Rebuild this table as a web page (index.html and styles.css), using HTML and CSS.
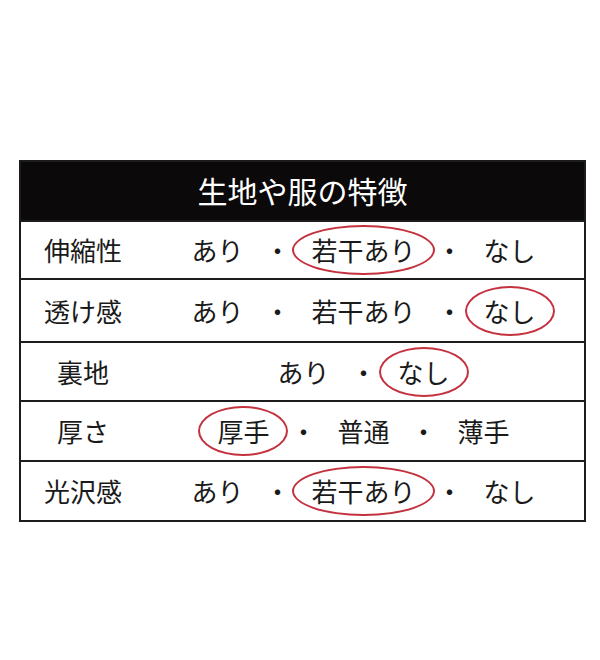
FILE: index.html
```html
<!DOCTYPE html>
<html lang="ja">
<head>
<meta charset="utf-8">
<title>生地や服の特徴</title>
<link rel="stylesheet" href="styles.css">
</head>
<body>
<div class="table">
  <div class="header">生地や服の特徴</div>
  <div class="row r1">
    <div class="label">伸縮性</div>
    <div class="values">
      <span class="item">あり</span><span class="dot">・</span><span class="item circled">若干あり</span><span class="dot">・</span><span class="item">なし</span>
    </div>
  </div>
  <div class="row r2">
    <div class="label">透け感</div>
    <div class="values">
      <span class="item">あり</span><span class="dot">・</span><span class="item">若干あり</span><span class="dot">・</span><span class="item circled">なし</span>
    </div>
  </div>
  <div class="row r3">
    <div class="label">裏地</div>
    <div class="values">
      <span class="item">あり</span><span class="dot">・</span><span class="item circled">なし</span>
    </div>
  </div>
  <div class="row r4">
    <div class="label">厚さ</div>
    <div class="values">
      <span class="item circled">厚手</span><span class="dot">・</span><span class="item">普通</span><span class="dot">・</span><span class="item">薄手</span>
    </div>
  </div>
  <div class="row r5">
    <div class="label">光沢感</div>
    <div class="values">
      <span class="item">あり</span><span class="dot">・</span><span class="item circled">若干あり</span><span class="dot">・</span><span class="item">なし</span>
    </div>
  </div>
</div>
</body>
</html>
```
FILE: styles.css
```css
* { box-sizing: border-box; }
html, body { margin: 0; padding: 0; background: #ffffff; }
body {
  font-family: "Noto Sans CJK JP", "Noto Sans", sans-serif;
  color: #1a1a1a;
}
.table {
  margin: 160px 0 0 19px;
  width: 567px;
  border: 2px solid #1c1c1c;
}
.header {
  height: 58px;
  background: #0b0909;
  color: #ffffff;
  font-size: 30px;
  line-height: 1;
  display: flex;
  align-items: center;
  justify-content: center;
  padding-bottom: 2px;
}
.row {
  display: flex;
  align-items: center;
  border-top: 2px solid #1c1c1c;
}
.r1 { height: 58px; }
.r2 { height: 63px; }
.r3 { height: 59px; }
.r4 { height: 60px; }
.r5 { height: 60px; }
.label {
  width: 124px;
  flex: none;
  text-align: center;
  font-size: 26px;
  line-height: 1;
}
.values {
  flex: 1;
  display: flex;
  justify-content: center;
  align-items: center;
  gap: 21px;
  font-size: 26px;
  line-height: 1;
  padding-right: 2px;
}
.item { position: relative; white-space: nowrap; }
.dot { width: 26px; text-align: center; }
.circled::after {
  content: "";
  position: absolute;
  left: -19px;
  right: -19px;
  top: -12px;
  bottom: -12px;
  border: 2px solid #c4323f;
  border-radius: 50%;
}
```
